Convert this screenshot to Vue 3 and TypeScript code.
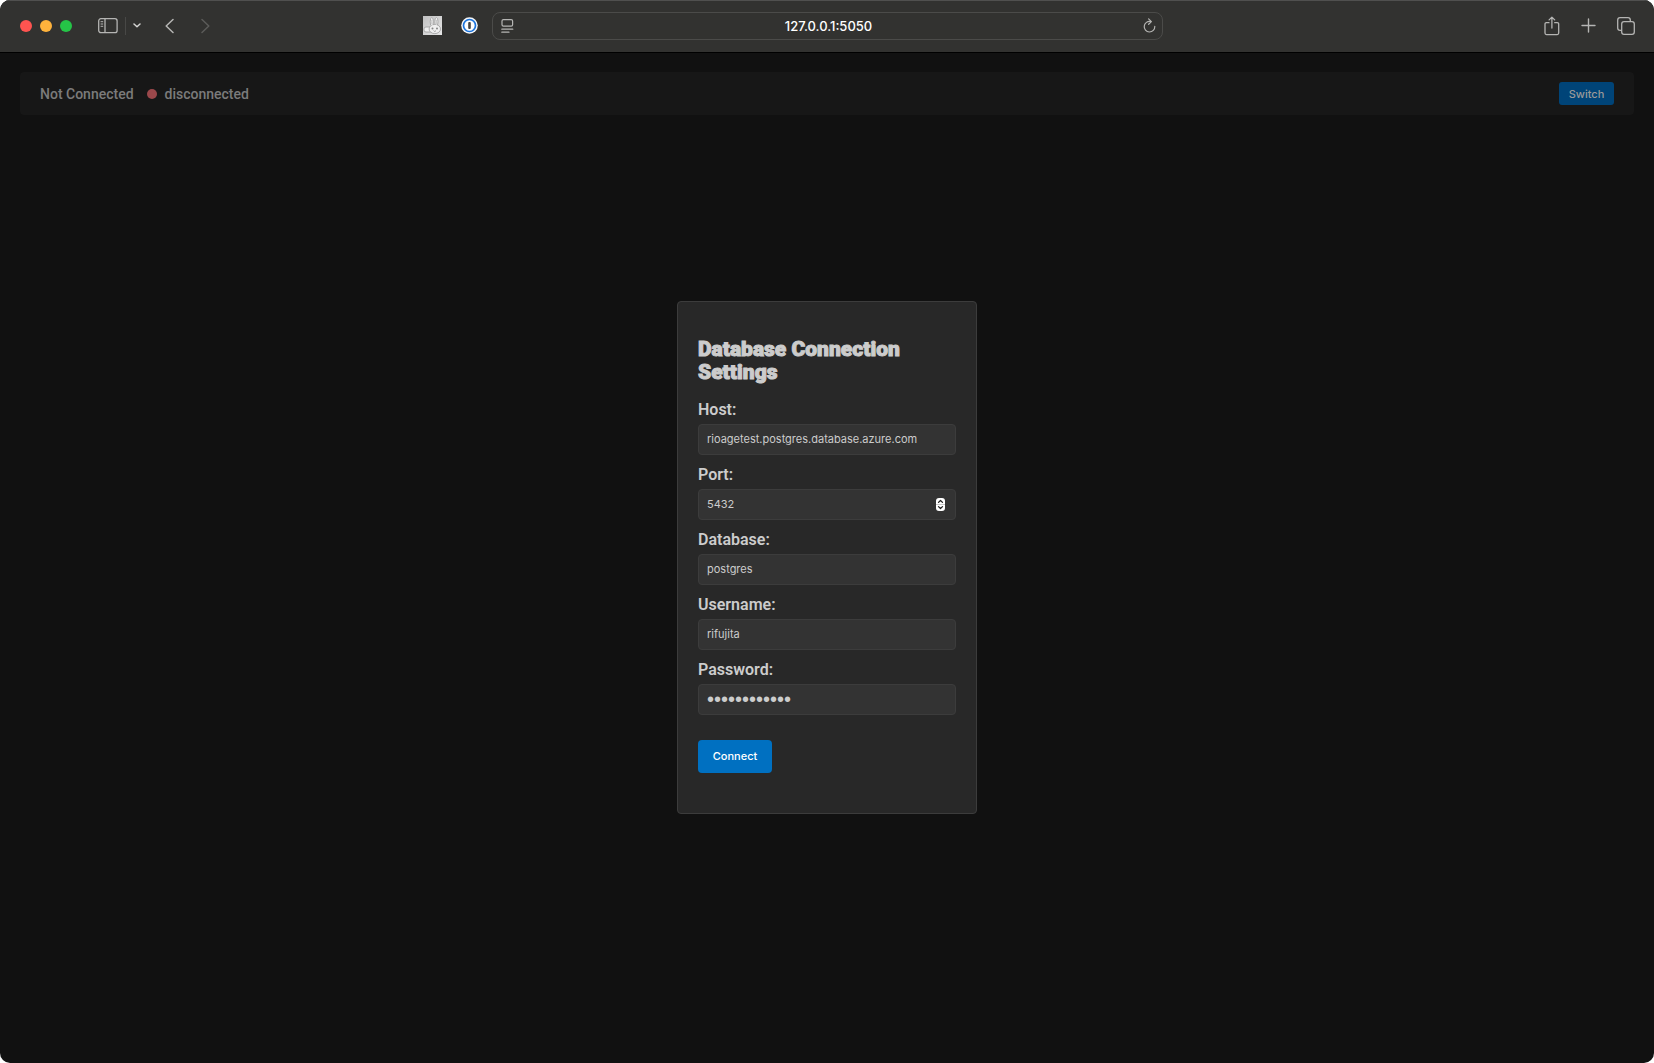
<script setup lang="ts">
import { reactive } from 'vue'

const address = '127.0.0.1:5050'

const form = reactive({
  host: 'rioagetest.postgres.database.azure.com',
  port: 5432,
  database: 'postgres',
  username: 'rifujita',
  password: 'secretsecret',
})
</script>

<template>
  <div class="window">
    <header class="toolbar">
      <div class="side left">
        <div class="lights">
          <span class="light red"></span>
          <span class="light yellow"></span>
          <span class="light green"></span>
        </div>
        <button class="tool sidebar" type="button" aria-label="Show sidebar">
          <svg width="20" height="16" viewBox="0 0 20 16" fill="none" stroke="currentColor">
            <rect x="0.7" y="0.7" width="18.4" height="14" rx="2.2" stroke-width="1.3" />
            <path d="M7 1v13.5" stroke-width="1.3" />
            <path d="M2.6 3.7h2.6M2.6 6h2.6M2.6 8.3h2.6" stroke-width="1" />
          </svg>
        </button>
        <span class="divider"></span>
        <button class="tool groups" type="button" aria-label="Tab groups">
          <svg width="8" height="5" viewBox="0 0 8 5" fill="none" stroke="currentColor" stroke-width="1.5" stroke-linecap="round" stroke-linejoin="round">
            <path d="M1 1l3 2.7L7 1" />
          </svg>
        </button>
        <button class="tool back" type="button" aria-label="Back">
          <svg width="9" height="16" viewBox="0 0 9 16" fill="none" stroke="currentColor" stroke-width="1.5" stroke-linecap="round" stroke-linejoin="round">
            <path d="M8 1.5L1.2 8L8 14.5" />
          </svg>
        </button>
        <button class="tool forward" type="button" aria-label="Forward">
          <svg width="9" height="16" viewBox="0 0 9 16" fill="none" stroke="currentColor" stroke-width="1.5" stroke-linecap="round" stroke-linejoin="round">
            <path d="M1 1.5L7.8 8L1 14.5" />
          </svg>
        </button>
        <div class="extensions">
          <button class="tool" type="button" aria-label="Rabbit extension">
            <svg width="19" height="19" viewBox="0 0 19 19">
              <defs>
                <linearGradient id="tile" x1="0" y1="0" x2="1" y2="1">
                  <stop offset="0" stop-color="#c0c0c0" />
                  <stop offset="1" stop-color="#e6e6e6" />
                </linearGradient>
              </defs>
              <rect width="19" height="19" fill="url(#tile)" />
              <g fill="#efefef" stroke="#9c9c9c" stroke-width="0.8">
                <rect x="1" y="11" width="9" height="5" rx="2" />
                <ellipse cx="8.8" cy="5.8" rx="1.6" ry="4.3" />
                <ellipse cx="13.4" cy="5.8" rx="1.6" ry="4.3" />
                <ellipse cx="11.8" cy="13" rx="5.7" ry="4.6" />
              </g>
              <path d="M8.4 9.5v-1h1.4v1zM12.600 9.500v-1H14v1z" fill="#efefef" />
              <path d="M8.800 4v4M13.400 4v4" stroke="#b5b5b5" stroke-width="0.700" />
              <circle cx="9.500" cy="12.500" r="1" fill="#858585" />
              <circle cx="14" cy="12.500" r="1" fill="#858585" />
              <path d="M10.600 14.600l1.200 1 1.200-1" fill="none" stroke="#8c8c8c" stroke-width="0.800" />
            </svg>
          </button>
          <button class="tool" type="button" aria-label="Password manager">
            <svg width="17" height="17" viewBox="0 0 17 17">
              <circle cx="8.500" cy="8.500" r="8.300" fill="#f4f6f8" />
              <circle cx="8.500" cy="8.500" r="6" fill="#fff" stroke="#1a73dc" stroke-width="1.700" />
              <rect x="7.200" y="5" width="2.600" height="7" rx="1" fill="#444" />
            </svg>
          </button>
        </div>
      </div>

      <div class="address">
        <button class="tool" type="button" aria-label="Page menu">
          <svg width="13" height="14" viewBox="0 0 13 14" fill="none" stroke="currentColor" stroke-width="1.2" stroke-linecap="round">
            <rect x="1" y="0.7" width="10.6" height="6.4" rx="1.4" />
            <path d="M0.8 10.2h11M0.8 13.2h7.2" />
          </svg>
        </button>
        <input class="url" type="text" :value="address" aria-label="Address" />
        <button class="tool" type="button" aria-label="Reload">
          <svg width="13" height="15" viewBox="0 0 13 15" fill="none" stroke="currentColor" stroke-width="1.2" stroke-linecap="round" stroke-linejoin="round">
            <path d="M7.6 3.5A5.3 5.3 0 1 0 11.8 8.4" />
            <path d="M5.6 0.9l2.8 2.7-2.8 2.7" />
          </svg>
        </button>
      </div>

      <div class="side right">
        <button class="tool" type="button" aria-label="Share">
          <svg width="16" height="20" viewBox="0 0 16 20" fill="none" stroke="currentColor" stroke-width="1.3" stroke-linecap="round" stroke-linejoin="round">
            <path d="M5 6.7H2.5Q1 6.7 1 8.2v8.9q0 1.5 1.5 1.5h10.7q1.5 0 1.5-1.5V8.2q0-1.5-1.5-1.5h-2.5" />
            <path d="M7.9 12V1.2M5.1 3.9l2.8-2.8 2.8 2.8" />
          </svg>
        </button>
        <button class="tool" type="button" aria-label="New tab">
          <svg width="15" height="15" viewBox="0 0 15 15" fill="none" stroke="currentColor" stroke-width="1.4" stroke-linecap="round">
            <path d="M7.5 1v13M1 7.5h13" />
          </svg>
        </button>
        <button class="tool" type="button" aria-label="Tab overview">
          <svg width="18" height="18" viewBox="0 0 18 18" fill="none" stroke="currentColor" stroke-width="1.3">
            <rect x="4.7" y="4.7" width="12.6" height="12.6" rx="2.3" />
            <path d="M4.7 13.3H3Q.7 13.3.7 11V3Q.7.7 3 .7h8q2.300 0 2.300 2.300v1.700" />
          </svg>
        </button>
      </div>
    </header>

    <main class="page">
      <section class="status">
        <span>Not Connected</span>
        <span class="dot"></span>
        <span class="state">disconnected</span>
        <button class="switch" type="button">Switch</button>
      </section>

      <div class="overlay">
        <form class="dialog" @submit.prevent>
          <h2>Database Connection Settings</h2>
          <div class="field">
            <label for="host">Host:</label>
            <input id="host" v-model="form.host" type="text" />
          </div>
          <div class="field">
            <label for="port">Port:</label>
            <div class="number">
              <input id="port" v-model="form.port" type="number" />
              <svg class="stepper" width="9" height="13" viewBox="0 0 9 13" fill="none">
                <rect width="9" height="13" rx="3" fill="#fff" />
                <path d="M0 6.5h9" stroke="#bbb" stroke-width="0.8" />
                <path d="M2.5 4.4l2-1.9 2 1.9M2.5 8.6l2 1.9 2-1.9" stroke="#222" stroke-width="1.3" stroke-linecap="round" stroke-linejoin="round" />
              </svg>
            </div>
          </div>
          <div class="field">
            <label for="database">Database:</label>
            <input id="database" v-model="form.database" type="text" />
          </div>
          <div class="field">
            <label for="username">Username:</label>
            <input id="username" v-model="form.username" type="text" />
          </div>
          <div class="field">
            <label for="password">Password:</label>
            <input id="password" v-model="form.password" class="secret" type="password" />
          </div>
          <button class="connect" type="submit">Connect</button>
        </form>
      </div>
    </main>
  </div>
</template>

<style>
body {
  margin: 0;
  background: #fff;
}
</style>

<style scoped>
.window {
  display: flex;
  flex-direction: column;
  min-height: 100vh;
  overflow: hidden;
  border-radius: 10px;
  background: #111;
  font-family: Roboto, "Liberation Sans", sans-serif;
}

button,
input {
  margin: 0;
  font-family: Inter, "Liberation Sans", sans-serif;
}

.toolbar {
  display: flex;
  align-items: center;
  box-sizing: border-box;
  height: 53px;
  padding-bottom: 2px;
  border-top: 1px solid #50504f;
  border-bottom: 1px solid #000;
  background: #323230;
}

.side {
  display: flex;
  flex: 1;
  align-items: center;
}

.left {
  padding-left: 20px;
}

.right {
  justify-content: flex-end;
  gap: 21px;
  padding-right: 19px;
}

.lights {
  display: flex;
  gap: 8px;
}

.light {
  width: 12px;
  height: 12px;
  border-radius: 50%;
}

.red {
  background: #ff5450;
}

.yellow {
  background: #ffb33c;
}

.green {
  background: #25c447;
}

.tool {
  display: flex;
  padding: 0;
  border: 0;
  background: none;
  color: #b5b5b3;
}

.sidebar {
  margin-left: 26px;
}

.divider {
  width: 1px;
  height: 18px;
  margin: 0 7px;
  background: #484846;
}

.groups {
  color: #d5d5d3;
}

.back {
  margin-left: 24px;
}

.forward {
  margin-left: 27px;
  color: #5b5b59;
}

.extensions {
  display: flex;
  align-items: center;
  gap: 19px;
  margin-left: auto;
  margin-right: 14px;
}

.address {
  display: flex;
  align-items: center;
  box-sizing: border-box;
  width: 671px;
  height: 28px;
  padding: 0 6px 0 8px;
  border: 1px solid #4b4b49;
  border-radius: 8px;
}

.url {
  flex: 1;
  min-width: 0;
  padding: 0;
  border: 0;
  outline: 0;
  background: none;
  color: #fff;
  font-size: 13px;
  font-weight: 500;
  text-align: center;
}

.page {
  position: relative;
  flex: 1;
  display: flex;
  flex-direction: column;
  padding: 19px 20px;
}

.status {
  display: flex;
  align-items: center;
  box-sizing: border-box;
  height: 43px;
  padding: 0 20px;
  border-radius: 4px;
  background: #171717;
  color: #7b7b7b;
  font-size: 14px;
  font-weight: 500;
}

.dot {
  width: 10px;
  height: 10px;
  margin: 0 8px 0 13px;
  border-radius: 50%;
  background: #9b484b;
}

.switch {
  width: 55px;
  height: 23px;
  margin-left: auto;
  padding: 0;
  border: 0;
  border-radius: 3px;
  background: #004478;
  color: #999;
  font-size: 11px;
  font-weight: 500;
}

.overlay {
  display: flex;
  flex: 1;
  align-items: center;
  justify-content: center;
  padding-bottom: 45px;
}

.dialog {
  box-sizing: border-box;
  width: 300px;
  padding: 36px 20px 40px;
  border: 1px solid #3c3c3c;
  border-radius: 4px;
  background: #282828;
  color: #ccc;
}

h2 {
  margin: 0 0 16px;
  font-size: 21px;
  font-weight: 900;
  line-height: 23px;
  -webkit-text-stroke: 1px #ccc;
}

.field {
  display: flex;
  flex-direction: column;
  gap: 5px;
  margin-bottom: 10px;
}

label {
  font-size: 16px;
  font-weight: 600;
  line-height: 19px;
}

.field input {
  box-sizing: border-box;
  width: 100%;
  height: 31px;
  padding: 0 8px;
  border: 1px solid #3c3c3c;
  border-radius: 4px;
  outline: 0;
  background: #333;
  color: #ccc;
  font-size: 11px;
}

.field .secret {
  font-family: "Liberation Sans", sans-serif;
  font-size: 20px;
}

.number {
  position: relative;
  display: flex;
}

.number input {
  appearance: textfield;
}

.stepper {
  position: absolute;
  top: 9px;
  right: 11px;
}

.connect {
  width: 74px;
  height: 33px;
  margin-top: 15px;
  padding: 0;
  border: 0;
  border-radius: 4px;
  background: #0070c1;
  color: #fff;
  font-size: 11px;
  font-weight: 500;
}
</style>
